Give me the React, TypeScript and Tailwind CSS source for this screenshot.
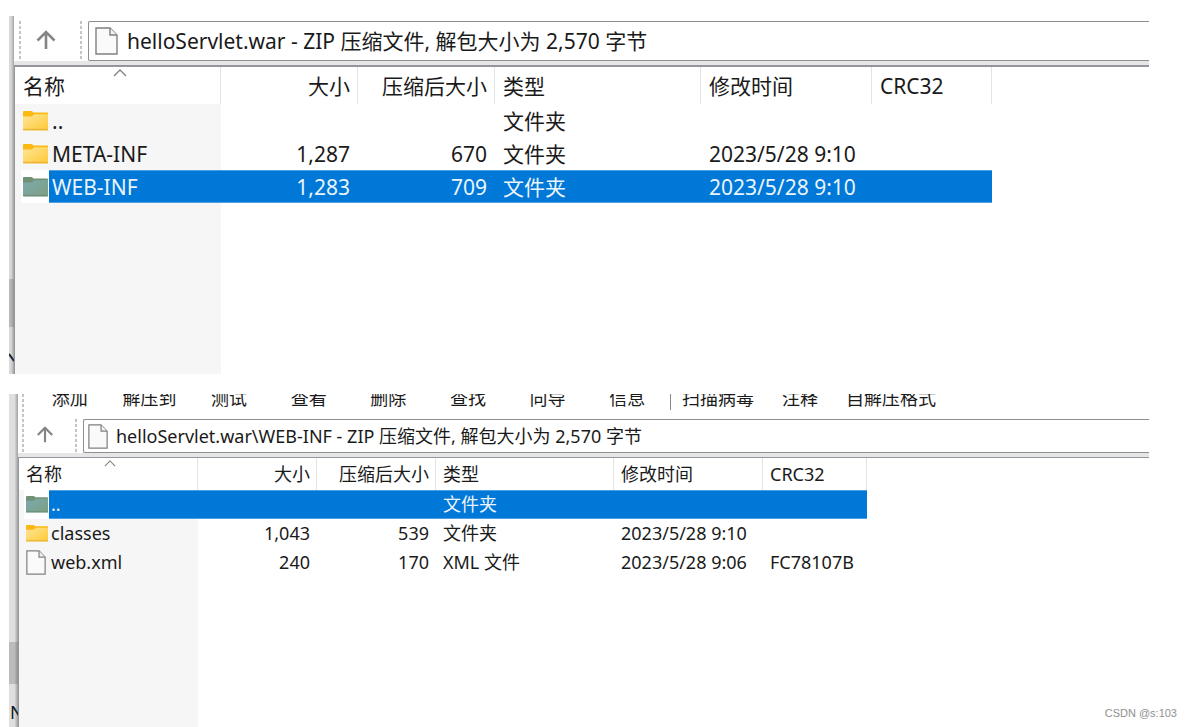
import React from "react";

type Entry = {
  name: string;
  kind: "folder" | "file";
  size?: string;
  packed?: string;
  type: string;
  modified?: string;
  crc?: string;
  selected?: boolean;
};

type Look = {
  text: string;
  addressRow: string;
  addressLeft: string;
  addressBox: string;
  addressIcon: string;
  arrow: string;
  frame: string;
  table: string;
  cols: string[];
  head: string;
  row: string;
  cell: string;
  nameText: string;
  sort: string;
  slot: string;
  chip: string;
  folder: string;
  file: string;
  filler: string;
};

const large: Look = {
  text: "text-[21px]",
  addressRow: "h-[45px] pt-[5px]",
  addressLeft: "w-[74px] pl-[5px] pr-[6px]",
  addressBox: "h-[40px] gap-[9px] pl-[6px]",
  addressIcon: "h-[28px] w-[23px]",
  arrow: "h-[20px] w-[20px]",
  frame: "border-t-2 border-l-1",
  table: "w-[977px]",
  cols: ["w-[206px]", "w-[137px]", "w-[137px]", "w-[206px]", "w-[171px]", "w-[120px]"],
  head: "h-[37px]",
  row: "h-[33px]",
  cell: "px-[8px] pt-[2px]",
  nameText: "pl-[3px] pt-[2px]",
  sort: "top-[2px] left-[98px] h-[8px] w-[14px]",
  slot: "w-[34px] pl-[6px]",
  chip: "w-[28px] pl-[2px]",
  folder: "h-[20px] w-[25px]",
  file: "h-[25px] w-[20px]",
  filler: "w-[206px]",
};

const small: Look = {
  text: "text-[18px]",
  addressRow: "h-[34px]",
  addressLeft: "w-[65px] pl-[4px] pr-[6px]",
  addressBox: "h-[34px] gap-[8px] pl-[4px]",
  addressIcon: "h-[25px] w-[20px]",
  arrow: "h-[17px] w-[18px]",
  frame: "border-t-1 border-l-1",
  table: "w-[848px]",
  cols: ["w-[179px]", "w-[119px]", "w-[119px]", "w-[178px]", "w-[149px]", "w-[104px]"],
  head: "h-[32px]",
  row: "h-[29px]",
  cell: "px-[7px] pb-[1px]",
  nameText: "pl-[2px] pb-[1px]",
  sort: "top-[2px] left-[85px] h-[7px] w-[12px]",
  slot: "w-[30px] pl-[5px]",
  chip: "w-[25px] pl-[2px]",
  folder: "h-[17px] w-[22px]",
  file: "h-[25px] w-[20px]",
  filler: "w-[179px]",
};

function FileIcon({ className }: { className: string }) {
  return (
    <svg className={className} viewBox="0 0 23 28" preserveAspectRatio="none" fill="none" aria-hidden="true">
      <path d="M1 1H15L22 8V27H1Z" fill="#fafafa" stroke="#808080" strokeWidth="1.4" />
      <path d="M15 1V8H22" fill="#f2f2f2" stroke="#808080" strokeWidth="1.4" />
    </svg>
  );
}

function FolderIcon({ className, selected }: { className: string; selected?: boolean }) {
  const id = selected ? "folder-on" : "folder-off";
  return (
    <svg className={className} viewBox="0 0 25 20" preserveAspectRatio="none" aria-hidden="true">
      <defs>
        <linearGradient id={id} x1="0" y1="0" x2="1" y2="1">
          <stop offset="0" stopColor={selected ? "#7ba9b0" : "#ffe599"} />
          <stop offset="1" stopColor={selected ? "#7d9f80" : "#ffc933"} />
        </linearGradient>
      </defs>
      <path d="M0 1Q0 0 1 0H8.500Q9.500 0 10.500 1.500H24Q25 1.500 25 2.500V6H0Z" fill={selected ? "#719277" : "#fcb813"} />
      <path d="M0 5.500H8.500Q9.500 5.500 11 3.200H25V18.500Q25 19.500 24 19.500H1Q0 19.500 0 18.500Z" fill={`url(#${id})`} />
      <path d="M0 18.500H25" stroke={selected ? "#6f917c" : "#e9b43a"} strokeWidth="1.400" />
    </svg>
  );
}

function Grip() {
  return (
    <span className="w-[2px] shrink-0 self-stretch bg-[repeating-linear-gradient(to_bottom,#c4c4c4_0px,#c4c4c4_3px,transparent_3px,transparent_5px)]" />
  );
}

function AddressBar({ look, value }: { look: Look; value: string }) {
  return (
    <div className={`flex shrink-0 ${look.addressRow}`}>
      <div className={`flex shrink-0 items-center justify-between ${look.addressLeft}`}>
        <Grip />
        <button type="button" aria-label="Up" className="flex flex-1 items-center justify-center pr-[9px] pb-[3px]">
          <svg className={look.arrow} viewBox="0 0 20 20" fill="none" stroke="#858585" strokeWidth="2.600" aria-hidden="true">
            <path d="M10 19V2M1.500 10.500L10 2L18.500 10.500" />
          </svg>
        </button>
        <Grip />
      </div>
      <div className={`flex min-w-0 flex-1 items-center rounded-l-[2px] border-y border-l border-[#8e8e8e] bg-white ${look.addressBox}`}>
        <FileIcon className={`shrink-0 ${look.addressIcon}`} />
        <input
          type="text"
          aria-label="Path"
          defaultValue={value}
          className={`h-full min-w-0 flex-1 bg-transparent pb-[2px] text-[#1a1a1a] outline-none ${look.text}`}
        />
      </div>
    </div>
  );
}

const headings = ["名称", "大小", "压缩后大小", "类型", "修改时间", "CRC32"];

function FileList({ look, entries }: { look: Look; entries: Entry[] }) {
  return (
    <div className={`flex min-h-0 flex-1 flex-col border-[#93979d] bg-white ${look.frame}`}>
      <table className={`table-fixed border-collapse whitespace-nowrap text-[#1a1a1a] ${look.table} ${look.text}`}>
        <colgroup>
          {look.cols.map((c, i) => (
            <col key={i} className={c} />
          ))}
        </colgroup>
        <thead>
          <tr className={look.head}>
            {headings.map((h, i) => (
              <th
                key={h}
                scope="col"
                className={`relative font-normal leading-none shadow-[inset_-1px_0_0_#e3e3e3] ${
                  i === 1 || i === 2 ? "text-right" : "text-left"
                }`}
              >
                {i === 0 && (
                  <svg className={`absolute ${look.sort}`} viewBox="0 0 14 8" fill="none" stroke="#808080" strokeWidth="1.300" aria-hidden="true">
                    <path d="M1 7L7 1L13 7" />
                  </svg>
                )}
                <span className={`block ${look.cell}`}>{h}</span>
              </th>
            ))}
          </tr>
        </thead>
        <tbody>
          {entries.map((e) => {
            const tone = e.selected ? "bg-[#0078d7] text-[#eaf4fc] shadow-[inset_0_1px_0_#4ba0e4,inset_0_-1px_0_#4ba0e4]" : "";
            return (
              <tr key={e.name} className={look.row}>
                <td className="bg-[#f6f6f6] leading-none">
                  <div className={`flex items-stretch ${look.row}`}>
                    <span className={`flex shrink-0 ${look.slot}`}>
                      <span className={`flex items-center ${look.chip} ${e.selected ? "bg-white" : ""}`}>
                        {e.kind === "folder" ? (
                          <FolderIcon className={look.folder} selected={e.selected} />
                        ) : (
                          <FileIcon className={look.file} />
                        )}
                      </span>
                    </span>
                    <span className={`flex flex-1 items-center ${look.nameText} ${tone}`}>{e.name}</span>
                  </div>
                </td>
                <td className={`text-right leading-none ${look.cell} ${tone}`}>{e.size}</td>
                <td className={`text-right leading-none ${look.cell} ${tone}`}>{e.packed}</td>
                <td className={`leading-none ${look.cell} ${tone}`}>{e.type}</td>
                <td className={`leading-none ${look.cell} ${tone}`}>{e.modified}</td>
                <td className={`leading-none ${look.cell} ${tone}`}>{e.crc}</td>
              </tr>
            );
          })}
        </tbody>
      </table>
      <div className={`flex-1 bg-[#f6f6f6] ${look.filler}`} />
    </div>
  );
}

const rootEntries: Entry[] = [
  { name: "..", kind: "folder", type: "文件夹" },
  { name: "META-INF", kind: "folder", size: "1,287", packed: "670", type: "文件夹", modified: "2023/5/28 9:10" },
  { name: "WEB-INF", kind: "folder", size: "1,283", packed: "709", type: "文件夹", modified: "2023/5/28 9:10", selected: true },
];

const webInfEntries: Entry[] = [
  { name: "..", kind: "folder", type: "文件夹", selected: true },
  { name: "classes", kind: "folder", size: "1,043", packed: "539", type: "文件夹", modified: "2023/5/28 9:10" },
  { name: "web.xml", kind: "file", size: "240", packed: "170", type: "XML 文件", modified: "2023/5/28 9:06", crc: "FC78107B" },
];

const mainCommands = ["添加", "解压到", "测试", "查看", "删除", "查找", "向导", "信息"];
const moreCommands = ["扫描病毒", "注释", "自解压格式"];

function Toolbar() {
  return (
    <div className="flex h-[25px] shrink-0 items-start overflow-hidden whitespace-nowrap pl-[4px] text-[18px] leading-none text-[#1a1a1a]">
      <Grip />
      <div className="-mt-[5px] ml-[6px] grid w-[637px] shrink-0 grid-cols-8">
        {mainCommands.map((c) => (
          <button key={c} type="button" className="text-center">
            {c}
          </button>
        ))}
      </div>
      <span className="ml-[3px] h-[16px] w-px shrink-0 bg-[#8a8a8a]" />
      <div className="-mt-[5px] ml-[11px] flex gap-[28px]">
        {moreCommands.map((c) => (
          <button key={c} type="button">
            {c}
          </button>
        ))}
      </div>
    </div>
  );
}

export default function App() {
  return (
    <main className="relative flex min-h-screen flex-col gap-5 bg-white pt-4 pr-[43px] pl-[9px] font-['Noto_Sans','Noto_Sans_CJK_SC',sans-serif]">
      <section className="flex min-h-[358px]">
        <div className="flex w-[5px] shrink-0 flex-col overflow-hidden bg-linear-to-r from-[#d9d9d9] from-40% to-[#a3a3a3]">
          <div className="mt-[263px] h-[48px] bg-linear-to-r from-[#b7b7b7] from-40% to-[#929292]" />
          <svg className="mt-[26px] h-[9px] w-[5px]" viewBox="0 0 5 9" aria-hidden="true">
            <path d="M0 1L5 8" stroke="#17243a" strokeWidth="2" />
          </svg>
        </div>
        <div className="flex min-w-0 flex-1 flex-col">
          <AddressBar look={large} value="helloServlet.war - ZIP 压缩文件, 解包大小为 2,570 字节" />
          <div className="h-[4px] shrink-0 bg-[#e6e6e6]" />
          <FileList look={large} entries={rootEntries} />
        </div>
      </section>

      <section className="flex min-h-[333px] flex-1">
        <div className="flex w-[9px] shrink-0 flex-col overflow-hidden bg-linear-to-r from-[#dfdfdf] from-60% to-[#a0a0a0]">
          <div className="mt-[248px] h-[42px] shrink-0 bg-linear-to-r from-[#bcbcbc] from-60% to-[#8e8e8e]" />
          <span className="mt-[19px] pl-[1px] text-[18px] leading-none text-[#101820]">N</span>
        </div>
        <div className="flex min-w-0 flex-1 flex-col">
          <Toolbar />
          <AddressBar look={small} value="helloServlet.war\WEB-INF - ZIP 压缩文件, 解包大小为 2,570 字节" />
          <div className="h-[4px] shrink-0 bg-[#e6e6e6]" />
          <FileList look={small} entries={webInfEntries} />
        </div>
      </section>

      <p className="absolute right-[15px] bottom-[6px] font-['Liberation_Sans',sans-serif] text-[11px] leading-4 text-[#8f8f8f]">CSDN @s:103</p>
    </main>
  );
}
